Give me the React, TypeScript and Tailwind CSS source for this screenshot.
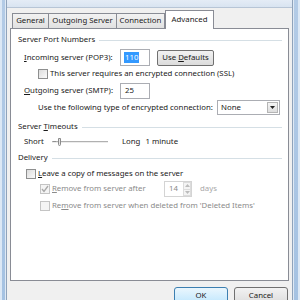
import React from 'react';

const font = { fontFamily: '"Noto Sans", "DejaVu Sans", sans-serif' };

function GroupHeader({ children }: { children: React.ReactNode }) {
  return (
    <div className="flex items-center h-[14px] pr-[6px] shrink-0">
      <span>{children}</span>
      <div className="flex-1 h-px bg-[#d5dfe5] ml-[4px]" />
    </div>
  );
}

function CheckBox({ checked, disabled }: { checked?: boolean; disabled?: boolean }) {
  return (
    <div
      className={`w-[10px] h-[10px] shrink-0 border flex items-center justify-center ${
        disabled ? 'border-[#c4c4c4] bg-[#f4f4f4]' : 'border-[#8e8f8f] bg-gradient-to-br from-[#dcdcdc] to-[#fbfbfb]'
      }`}
    >
      {checked && (
        <svg width="8" height="8" viewBox="0 0 8 8">
          <path d="M1 4 L3 6.5 L7 1" fill="none" stroke="#a8a8a8" strokeWidth="1.3" />
        </svg>
      )}
    </div>
  );
}

export default function App() {
  return (
    <div className="w-[300px] h-[300px] overflow-hidden flex bg-[#f0f0f0] text-[7.8px] text-[#1a1a1a] leading-none whitespace-nowrap" style={font}>
      {/* left glass border */}
      <div className="flex h-full shrink-0">
        <div className="w-[2px] bg-[#dce8f5]" />
        <div className="w-[3px] bg-gradient-to-b from-[#b3cbe6] to-[#a5c2e2]" />
        <div className="w-[1px] bg-[#dfe9f4]" />
        <div className="w-[1px] bg-[#8fa3bb]" />
      </div>

      <div className="flex-1 flex flex-col">
        <div className="h-[8px] shrink-0 bg-gradient-to-b from-[#e4ecf6] to-[#d9e4f1] border-b border-[#b7c5d6]" />

        <div className="flex-1 flex flex-col pl-[3px] pr-[3px]">
          {/* tabs */}
          <div className="flex items-end h-[20px] shrink-0 pl-[2px] pt-[2px]">
            <div className="h-[15px] flex items-center border border-b-0 border-[#898c95] bg-gradient-to-b from-[#f2f2f2] to-[#e1e1e1] w-[37px] justify-center">General</div>
            <div className="h-[15px] flex items-center border border-l-0 border-b-0 border-[#898c95] bg-gradient-to-b from-[#f2f2f2] to-[#e1e1e1] w-[68px] justify-center">Outgoing Server</div>
            <div className="h-[15px] flex items-center border border-l-0 border-b-0 border-[#898c95] bg-gradient-to-b from-[#f2f2f2] to-[#e1e1e1] w-[48px] justify-center">Connection</div>
            <div className="h-[19px] -mb-px relative z-10 flex items-center border border-b-0 border-[#898c95] bg-white w-[49px] justify-center">Advanced</div>
          </div>

          {/* tab panel */}
          <div className="h-[253px] shrink-0 border border-[#898c95] bg-white flex flex-col pl-[7px] pt-[4px]">
            <GroupHeader>Server Port Numbers</GroupHeader>

            <div className="flex items-center mt-[2px] h-[17px] pl-[6px]">
              <span className="w-[96px]"><span className="underline">I</span>ncoming server (POP3):</span>
              <div className="w-[30px] h-[17px] border border-[#abadb3] flex items-center pl-[3px]">
                <span className="bg-[#3399ff] text-white px-[1px] h-[11px] flex items-center">110</span>
              </div>
              <div className="ml-[7px] w-[57px] h-[16px] rounded-[2px] border border-[#707070] bg-gradient-to-b from-[#f2f2f2] to-[#dcdcdc] flex items-center justify-center">
                Use&nbsp;<span className="underline">D</span>efaults
              </div>
            </div>

            <div className="flex items-center h-[14px] pl-[20px] mt-[1px]">
              <CheckBox />
              <span className="ml-[2px]">This server requires an encrypted connection (SSL)</span>
            </div>

            <div className="flex items-center h-[17px] mt-[1px] pl-[6px]">
              <span className="w-[96px]"><span className="underline">O</span>utgoing server (SMTP):</span>
              <div className="w-[30px] h-[16px] border border-[#abadb3] flex items-center pl-[4px]">25</div>
            </div>

            <div className="flex items-center h-[15px] mt-[1px] pl-[20px]">
              <span className="w-[179px]">Use the following type of encrypted connection:</span>
              <div className="w-[63px] h-[15px] border border-[#abadb3] flex items-center justify-between pl-[3px] pr-[1px]">
                <span>None</span>
                <div className="w-[11px] h-[11px] border border-[#b5b5b5] bg-gradient-to-b from-[#f5f5f5] to-[#dedede] flex items-center justify-center">
                  <svg width="5" height="3" viewBox="0 0 5 3"><path d="M0 0 H5 L2.5 3 Z" fill="#222" /></svg>
                </div>
              </div>
            </div>

            <div className="mt-[5px]">
              <GroupHeader>Server <span className="underline">T</span>imeouts</GroupHeader>
            </div>

            <div className="flex items-center h-[16px] pl-[6px]">
              <span className="w-[28px]">Short</span>
              <div className="relative w-[56px] h-[10px] flex items-center">
                <div className="w-full h-[2px] border-t border-[#b0b0b0] border-b border-b-[#ececec]" />
                <div className="absolute left-[1px] top-[4px] w-[3px] h-px bg-[#909090]" />
                <div className="absolute left-[6px] top-[1px] w-[3px] h-[8px] rounded-b-[2px] border border-[#8a8a8a] bg-[#e6e6e6]" />
              </div>
              <span className="ml-[14px]">Long</span>
              <span className="ml-[5px]">1 minute</span>
            </div>

            <div className="mt-[1px]">
              <GroupHeader>Delivery</GroupHeader>
            </div>

            <div className="flex items-center h-[15px] mt-[1px] pl-[8px]">
              <CheckBox />
              <span className="ml-[2px]"><span className="underline">L</span>eave a copy of messages on the server</span>
            </div>

            <div className="flex items-center h-[16px] pl-[22px] text-[#8b8b8b]">
              <CheckBox checked disabled />
              <span className="ml-[2px] w-[112px]"><span className="underline">R</span>emove from server after</span>
              <div className="w-[28px] h-[16px] border border-[#d4d4d4] flex items-center justify-between pl-[4px]">
                <span>14</span>
                <div className="flex flex-col w-[8px] h-full">
                  <div className="flex-1 border border-[#dcdcdc] bg-[#f4f4f4] flex items-center justify-center">
                    <svg width="5" height="3" viewBox="0 0 5 3"><path d="M0 3 H5 L2.5 0 Z" fill="#bcbcbc" /></svg>
                  </div>
                  <div className="flex-1 border border-t-0 border-[#dcdcdc] bg-[#f4f4f4] flex items-center justify-center">
                    <svg width="5" height="3" viewBox="0 0 5 3"><path d="M0 0 H5 L2.5 3 Z" fill="#bcbcbc" /></svg>
                  </div>
                </div>
              </div>
              <span className="ml-[8px] text-[#a8a8a8]">days</span>
            </div>

            <div className="flex items-center h-[15px] mt-[1px] pl-[22px] text-[#8b8b8b]">
              <CheckBox disabled />
              <span className="ml-[2px]">Re<span className="underline">m</span>ove from server when deleted from 'Deleted Items'</span>
            </div>
          </div>

          {/* buttons */}
          <div className="flex justify-end shrink-0 pt-[6px] pr-[1px] gap-[6px]">
            <div className="w-[54px] h-[18px] rounded-[3px] border border-[#3c7fb1] bg-gradient-to-b from-[#eaf6fd] to-[#bee6fd] flex items-center justify-center">OK</div>
            <div className="w-[54px] h-[18px] rounded-[3px] border border-[#707070] bg-gradient-to-b from-[#f2f2f2] to-[#dcdcdc] flex items-center justify-center">Cancel</div>
          </div>
        </div>
      </div>

      {/* right glass border */}
      <div className="flex h-full shrink-0">
        <div className="w-[1px] bg-[#8fa3bb]" />
        <div className="w-[1px] bg-[#dfe9f4]" />
        <div className="w-[4px] bg-gradient-to-b from-[#b3cbe6] to-[#a5c2e2]" />
        <div className="w-[2px] bg-[#dce8f5]" />
      </div>
    </div>
  );
}
